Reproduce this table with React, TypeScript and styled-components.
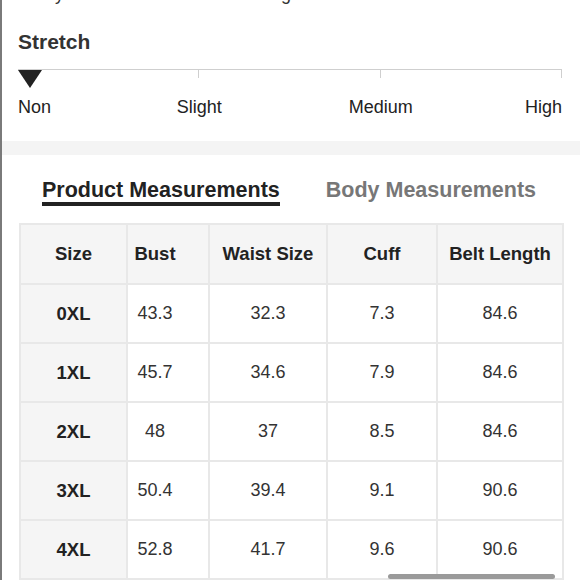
import React from "react";
import styled, { createGlobalStyle } from "styled-components";

const Global = createGlobalStyle`
  html, body { margin: 0; padding: 0; background: #fff; }
  body { font-family: "Liberation Sans", Arial, sans-serif; color: #222; }
  * { box-sizing: border-box; }
`;

const Page = styled.div`
  display: flex;
  width: 580px;
  height: 580px;
  overflow: hidden;
`;

const EdgeLine = styled.div`
  width: 2px;
  flex: none;
  background: #7a7a7a;
`;

const Content = styled.div`
  flex: 1;
  display: flex;
  flex-direction: column;
  min-width: 0;
  position: relative;
`;

const StretchSection = styled.section`
  padding: 0 16px;
`;

const ClippedLine = styled.p`
  margin: -16px 0 0;
  font-size: 18px;
  line-height: 20px;
  color: #333;
  white-space: nowrap;
`;

const Title = styled.h3`
  margin: 26px 0 0;
  font-size: 21px;
  line-height: 24px;
  font-weight: 700;
  color: #333;
`;

const Scale = styled.div`
  position: relative;
  margin-top: 15px;
  width: 544px;
`;

const Track = styled.div`
  display: flex;
`;

const Segment = styled.div`
  flex: 1;
  height: 9px;
  border-top: 1px solid #cfcfcf;
  border-right: 1px solid #cfcfcf;
`;

const Pointer = styled.div`
  position: absolute;
  left: 0;
  top: 1px;
  width: 0;
  height: 0;
  border-left: 12px solid transparent;
  border-right: 12px solid transparent;
  border-top: 18px solid #222;
`;

const Labels = styled.div`
  display: grid;
  grid-template-columns: 1fr 2fr 2fr 1fr;
  width: 544px;
  margin-top: 18px;
  font-size: 18px;
  line-height: 22px;
  color: #222;
`;

const Label = styled.span<{ $align: "left" | "center" | "right" }>`
  text-align: ${(p) => p.$align};
`;

const Band = styled.div`
  height: 14px;
  margin-top: 23px;
  background: #f4f4f4;
`;

const Tabs = styled.div`
  display: flex;
  gap: 46px;
  padding-left: 40px;
  margin-top: 23px;
`;

const Tab = styled.div<{ $active?: boolean }>`
  font-size: 21.5px;
  line-height: 24px;
  font-weight: 700;
  color: ${(p) => (p.$active ? "#222" : "#777")};
  border-bottom: 4px solid ${(p) => (p.$active ? "#222" : "transparent")};
`;

const TableWrap = styled.div`
  margin-top: 17px;
  padding-left: 17px;
`;

const Table = styled.table`
  border-collapse: collapse;
  table-layout: fixed;
  width: 543px;
  font-size: 18px;
`;

const Th = styled.th<{ $shift?: boolean }>`
  height: 60px;
  padding: 0 ${(p) => (p.$shift ? "26px" : "0")} 0 0;
  border: 2px solid #e8e8e8;
  background: #f5f5f5;
  font-size: 18.5px;
  font-weight: 700;
  color: #222;
  text-align: center;
`;

const SizeCell = styled.td`
  height: 59px;
  padding: 0;
  border: 2px solid #e8e8e8;
  background: #f5f5f5;
  font-size: 18.5px;
  font-weight: 700;
  color: #222;
  text-align: center;
`;

const Td = styled.td<{ $shift?: boolean }>`
  height: 59px;
  padding: 0 ${(p) => (p.$shift ? "26px" : "0")} 0 0;
  border: 2px solid #e8e8e8;
  background: #fff;
  color: #333;
  text-align: center;
`;

const ScrollThumb = styled.div`
  position: absolute;
  left: 386px;
  bottom: 1px;
  width: 167px;
  height: 5px;
  border-radius: 3px;
  background: #9a9a9a;
`;

const headers = ["Size", "Bust", "Waist Size", "Cuff", "Belt Length"];
const widths = [107, 82, 118, 110, 126];
const rows = [
  ["0XL", "43.3", "32.3", "7.3", "84.6"],
  ["1XL", "45.7", "34.6", "7.9", "84.6"],
  ["2XL", "48", "37", "8.5", "84.6"],
  ["3XL", "50.4", "39.4", "9.1", "90.6"],
  ["4XL", "52.8", "41.7", "9.6", "90.6"],
];

export default function App() {
  return (
    <>
      <Global />
      <Page>
        <EdgeLine />
        <Content>
          <StretchSection>
            <ClippedLine>Every size is measured at full length</ClippedLine>
            <Title>Stretch</Title>
            <Scale>
              <Track>
                <Segment />
                <Segment />
                <Segment />
              </Track>
              <Pointer />
            </Scale>
            <Labels>
              <Label $align="left">Non</Label>
              <Label $align="center">Slight</Label>
              <Label $align="center">Medium</Label>
              <Label $align="right">High</Label>
            </Labels>
          </StretchSection>
          <Band />
          <Tabs>
            <Tab $active>Product Measurements</Tab>
            <Tab>Body Measurements</Tab>
          </Tabs>
          <TableWrap>
            <Table>
              <colgroup>
                {widths.map((w, i) => (
                  <col key={i} style={{ width: w }} />
                ))}
              </colgroup>
              <thead>
                <tr>
                  {headers.map((h, i) => (
                    <Th key={h} $shift={i === 1}>
                      {h}
                    </Th>
                  ))}
                </tr>
              </thead>
              <tbody>
                {rows.map((r) => (
                  <tr key={r[0]}>
                    <SizeCell>{r[0]}</SizeCell>
                    <Td $shift>{r[1]}</Td>
                    <Td>{r[2]}</Td>
                    <Td>{r[3]}</Td>
                    <Td>{r[4]}</Td>
                  </tr>
                ))}
              </tbody>
            </Table>
          </TableWrap>
          <ScrollThumb />
        </Content>
      </Page>
    </>
  );
}
